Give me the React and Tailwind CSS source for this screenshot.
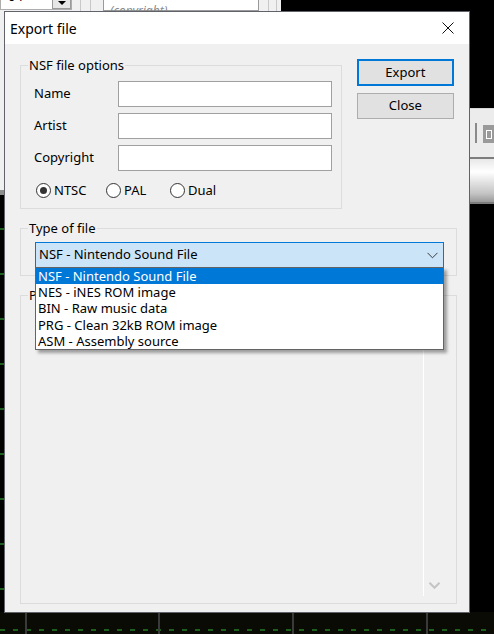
import React from 'react'

function Chevron({ className, color = '#3c3c3c', width = 1 }) {
  return (
    <svg viewBox="0 0 11 7" className={className} fill="none">
      <path d="M0.5 0.8 L5.5 5.8 L10.5 0.8" stroke={color} strokeWidth={width} />
    </svg>
  )
}

function Radio({ label, checked, className }) {
  return (
    <div className={`flex items-center ${className}`}>
      <span className="grid h-[15px] w-[15px] place-items-center rounded-full border border-[#333] bg-white">
        {checked && <span className="h-[7px] w-[7px] rounded-full bg-[#333]" />}
      </span>
      <span className="ml-[3px]">{label}</span>
    </div>
  )
}

function Backdrop() {
  return (
    <>
      {/* app window behind the dialog */}
      <div className="absolute left-0 top-0 h-[190px] w-[281px] bg-[#f0f0f0]" />
      <div className="absolute left-0 top-[190px] h-[5px] w-[5px] bg-[#8c8c8c]" />
      <div className="absolute left-0 top-[-14px] flex h-[24px] w-[72px] items-end border border-[#adadad] bg-white pb-[6px] pl-[7px] text-[13px] leading-none">
        04
      </div>
      <div className="absolute left-[52px] top-[-10px] grid h-[19px] w-[19px] place-items-end justify-center border border-[#9a9a9a] bg-[#e6e6e6] pb-[3px]">
        <span className="h-0 w-0 border-x-[4px] border-t-[4px] border-x-transparent border-t-black" />
      </div>
      <div className="absolute left-[80px] top-0 h-[11px] w-px bg-[#c8c8c8]" />
      <div className="absolute left-[90px] top-0 h-[11px] w-px bg-[#c8c8c8]" />
      <div className="absolute left-[103px] top-[-12px] h-[23px] w-[156px] border border-[#9a9a9a] bg-white pl-[6px] pt-[16px] text-[12px] italic leading-none text-[#8a8a8a]">
        (copyright)
      </div>
      <div className="absolute left-[268px] top-0 h-[11px] w-px bg-[#c8c8c8]" />
      <div className="absolute left-[276px] top-0 h-[11px] w-px bg-[#c8c8c8]" />

      {/* right side toolbar */}
      <div className="absolute left-[469px] top-[108px] h-[50px] w-[25px] border-t border-[#d8d8d8] bg-[#ececec]" />
      <div className="absolute left-[475px] top-[123px] h-[20px] w-[2px] bg-[#8a8a8a]" />
      <div className="absolute left-[483px] top-[125px] h-[18px] w-[11px] bg-[#9a9a9a]">
        <div className="ml-[3px] mt-[5px] h-[9px] w-[6px] border border-white" />
      </div>
      <div className="absolute left-[469px] top-[157px] h-[47px] w-[25px] border-y-2 border-[#7d7d7d] bg-[linear-gradient(180deg,#e8e8e8_0%,#ffffff_30%,#c4c4c4_80%,#9a9a9a_100%)]" />

      {/* bottom track area */}
      <div className="absolute bottom-0 left-0 h-[22px] w-[494px] bg-[#0b0b06]">
        <div className="absolute left-0 top-[17px] h-[2px] w-full bg-[repeating-linear-gradient(90deg,#1d5f1d_0_5px,transparent_5px_13px)]" />
        <div className="absolute left-[25px] top-0 h-full w-[2px] bg-[#3a3a3a]" />
        <div className="absolute left-[158px] top-0 h-full w-[2px] bg-[#3a3a3a]" />
        <div className="absolute left-[292px] top-0 h-full w-[2px] bg-[#3a3a3a]" />
        <div className="absolute left-[426px] top-0 h-full w-[2px] bg-[#3a3a3a]" />
      </div>
      <div className="absolute left-0 top-[200px] h-[412px] w-[4px] bg-[repeating-linear-gradient(180deg,transparent_0_28px,#1d5f1d_28px_30px,transparent_30px_45px)]" />
    </>
  )
}

const FILE_TYPES = [
  'NSF - Nintendo Sound File',
  'NES - iNES ROM image',
  'BIN - Raw music data',
  'PRG - Clean 32kB ROM image',
  'ASM - Assembly source',
]

export default function App() {
  return (
    <div className="relative h-[634px] w-[494px] overflow-hidden bg-black font-['Segoe_UI','Noto_Sans',sans-serif] text-[13px] text-black">
      <Backdrop />

      {/* Export dialog */}
      <div className="absolute left-[4px] top-[11px] flex h-[602px] w-[466px] flex-col border border-[#60646a] bg-[#f0f0f0]">
        <div className="flex h-[32px] shrink-0 items-center justify-between bg-white pl-[5px] pr-[15px]">
          <span className="text-[14px]">Export file</span>
          <svg viewBox="0 0 12 12" className="h-[12px] w-[12px]">
            <path d="M0.5 0.5 L11.5 11.5 M11.5 0.5 L0.5 11.5" stroke="#111" strokeWidth="1" />
          </svg>
        </div>

        <div className="flex flex-1 flex-col px-[15px] pt-[15px]">
          <div className="flex items-start gap-[15px]">
            <div className="relative mt-[6px] h-[144px] w-[324px] border border-[#dcdcdc] pl-[13px] pt-[15px]">
              <span className="absolute left-[7px] top-[-10px] bg-[#f0f0f0] px-[1px] leading-[18px]">NSF file options</span>
              <div className="grid grid-cols-[84px_214px] items-center gap-y-[6px]">
                <span>Name</span>
                <div className="h-[26px] border border-[#a0a0a0] bg-white" />
                <span>Artist</span>
                <div className="h-[26px] border border-[#a0a0a0] bg-white" />
                <span>Copyright</span>
                <div className="h-[26px] border border-[#a0a0a0] bg-white" />
              </div>
              <div className="ml-[2px] mt-[11px] flex h-[17px] items-center">
                <Radio label="NTSC" checked className="w-[70px]" />
                <Radio label="PAL" className="w-[64px]" />
                <Radio label="Dual" />
              </div>
            </div>

            <div className="flex w-[98px] flex-col gap-[7px]">
              <button type="button" className="h-[27px] border-2 border-[#0078d7] bg-[#e1e1e1]">Export</button>
              <button type="button" className="h-[26px] border border-[#adadad] bg-[#e1e1e1]">Close</button>
            </div>
          </div>

          <div className="relative mt-[19px] h-[48px] w-[437px] border border-[#dcdcdc] pl-[14px] pt-[13px]">
            <span className="absolute left-[7px] top-[-10px] bg-[#f0f0f0] px-[1px] leading-[18px]">Type of file</span>
            <div className="flex h-[26px] w-[409px] items-center justify-between border border-[#0078d7] bg-[#cce4f7] pl-[3px] pr-[5px]">
              <span>NSF - Nintendo Sound File</span>
              <Chevron className="h-[7px] w-[11px]" />
            </div>
          </div>

          <div className="relative mt-[19px] flex h-[309px] w-[437px] justify-end border border-[#dcdcdc] pb-[7px] pr-[12px] pt-[4px]">
            <span className="absolute left-[7px] top-[-10px] bg-[#f0f0f0] px-[1px] leading-[18px]">Progress</span>
            <div className="flex w-[21px] flex-col items-center justify-end border-l border-white pb-[7px]">
              <Chevron className="h-[7px] w-[11px]" color="#c4c4c4" width={2} />
            </div>
          </div>
        </div>
      </div>

      {/* open dropdown list */}
      <div className="absolute left-[35px] top-[267px] w-[409px] border border-[#646464] bg-white shadow-[3px_3px_3px_rgba(0,0,0,0.35)]">
        {FILE_TYPES.map((t, i) => (
          <div
            key={t}
            className={`h-[16.2px] pl-[2px] leading-[16px] ${i === 0 ? 'bg-[#0078d7] text-white' : ''}`}
          >
            {t}
          </div>
        ))}
      </div>
    </div>
  )
}
